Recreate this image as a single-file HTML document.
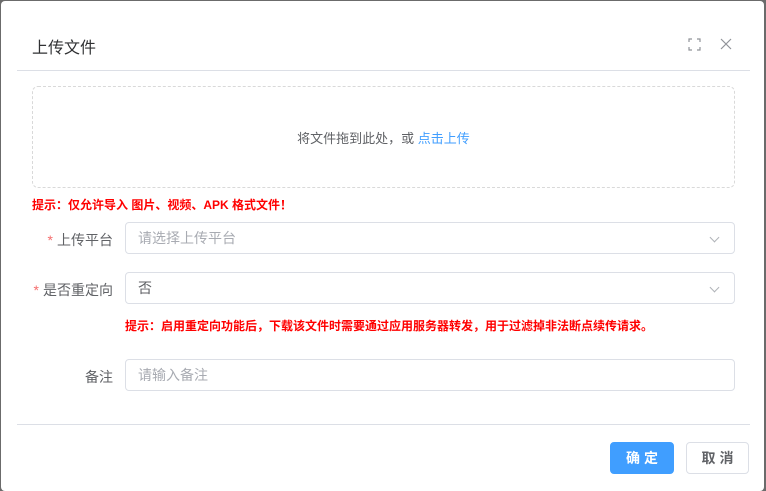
<!DOCTYPE html>
<html><head><meta charset="utf-8"><style>
*{box-sizing:border-box;margin:0;padding:0}
body{width:766px;height:489px;background:#6b6b6b;position:relative;overflow:hidden;font-family:"Liberation Sans","Noto Sans CJK SC",sans-serif}
.dlg{position:absolute;left:1px;top:1px;width:763px;height:490px;background:#fff;border-radius:4px}
.abs{position:absolute}
.title{left:31px;top:33px;font-size:16px;color:#303133}
.line{height:1px;background:#dcdfe6;left:16px;width:733px}
.up{left:31px;top:85px;width:703px;height:102px;border:1px dashed #d9d9d9;border-radius:6px;text-align:center;line-height:104px;font-size:13px;color:#606266}
.up span{color:#409eff}
.red{color:#f00;font-size:12px;font-weight:bold}
.lbl{font-size:14px;color:#606266;text-align:right;width:100px;left:12px}
.lbl b{color:#f56c6c;font-weight:normal;margin-right:4px}
.inp{left:124px;width:610px;height:32px;border:1px solid #dcdfe6;border-radius:4px;font-size:14px;line-height:30px;padding-left:12px;color:#606266}
.ph{color:#a8abb2}
.arr{position:absolute;right:16px;top:11px;width:7px;height:7px;border-right:1px solid #b0b3b8;border-bottom:1px solid #b0b3b8;transform:rotate(45deg)}
.btn{top:441px;height:32px;border-radius:4px;font-size:14px;font-weight:bold;text-align:center;line-height:30px;letter-spacing:4px;padding-left:4px}
</style></head><body>
<div class="dlg">
<div class="abs title">上传文件</div>
<svg class="abs" style="left:687px;top:37px" width="13" height="13" viewBox="0 0 13 13" fill="none" stroke="#909399" stroke-width="1.2"><path d="M1 4V1h3M9 1h3v3M12 9v3H9M4 12H1V9"/></svg>
<svg class="abs" style="left:719px;top:37px" width="12" height="12" viewBox="0 0 12 12" stroke="#909399" stroke-width="1.2"><path d="M1 1L11 11M11 1L1 11"/></svg>
<div class="abs line" style="top:69px"></div>
<div class="abs up">将文件拖到此处，或 <span>点击上传</span></div>
<div class="abs red" style="left:31px;top:195px">提示：仅允许导入 图片、视频、APK 格式文件！</div>
<div class="abs lbl" style="top:229px"><b>*</b>上传平台</div>
<div class="abs inp" style="top:221px"><span class="ph">请选择上传平台</span><i class="arr"></i></div>
<div class="abs lbl" style="top:279px"><b>*</b>是否重定向</div>
<div class="abs inp" style="top:271px">否<i class="arr"></i></div>
<div class="abs red" style="left:124px;top:316px">提示：启用重定向功能后，下载该文件时需要通过应用服务器转发，用于过滤掉非法断点续传请求。</div>
<div class="abs lbl" style="top:366px">备注</div>
<div class="abs inp" style="top:358px"><span class="ph">请输入备注</span></div>
<div class="abs line" style="top:423px"></div>
<div class="abs btn" style="left:609px;width:64px;background:#409eff;color:#fff;border:1px solid #409eff">确定</div>
<div class="abs btn" style="left:685px;width:63px;background:#fff;color:#606266;border:1px solid #dcdfe6">取消</div>
</div>
</body></html>
